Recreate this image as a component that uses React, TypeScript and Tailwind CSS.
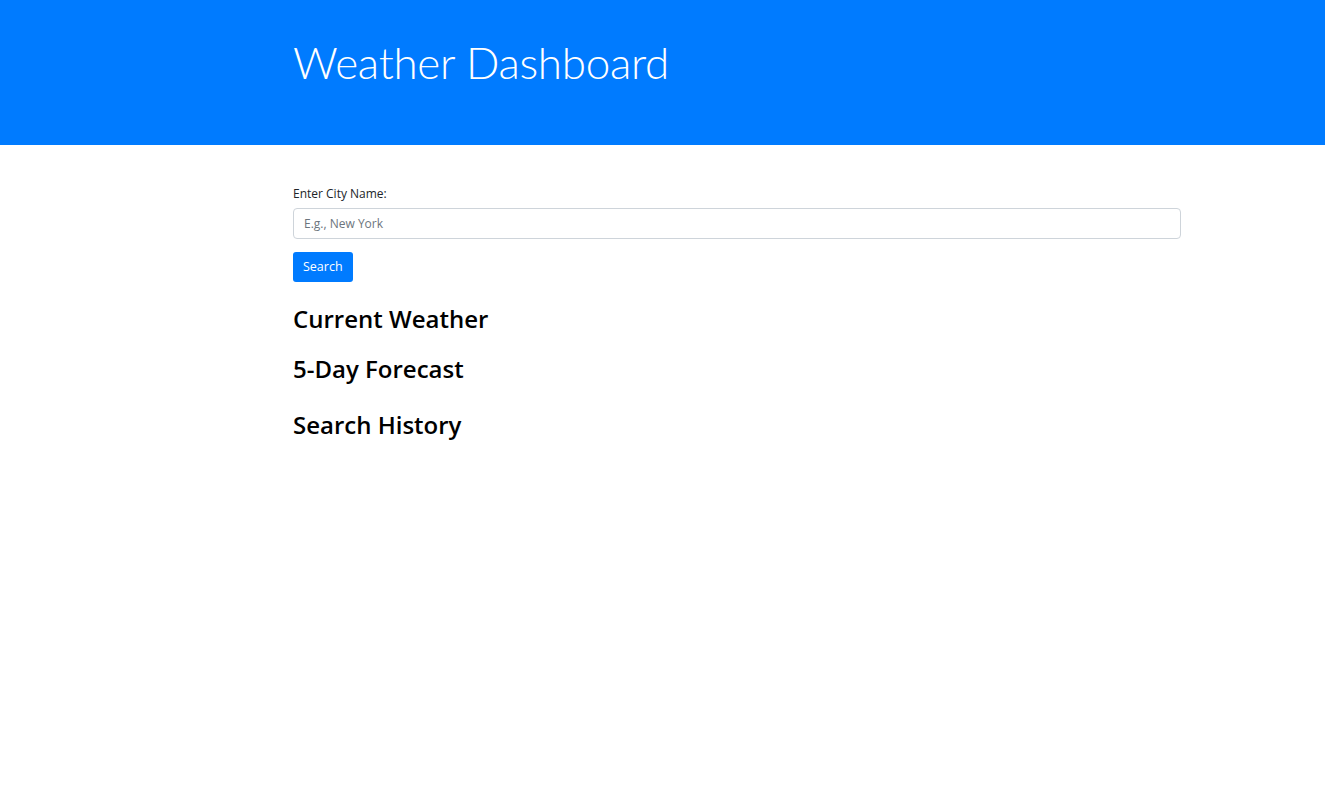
export default function App() {
  return (
    <div className="min-h-screen bg-white font-['Open_Sans',sans-serif] text-[#212529]">
      <header className="h-[145px] bg-[#007bff]">
        <div className="ml-[293px] pt-[36px]">
          <h1 className="font-['Lato',sans-serif] text-[44px] font-light leading-[1.2] tracking-[-0.3px] text-white">
            Weather Dashboard
          </h1>
        </div>
      </header>

      <main className="ml-[293px] w-[888px] pt-[40px]">
        <form className="flex flex-col">
          <label htmlFor="city" className="text-[12px] leading-[1.5] text-[#212529]">
            Enter City Name:
          </label>
          <input
            id="city"
            type="text"
            placeholder="E.g., New York"
            className="mt-[5px] h-[31px] w-full rounded-[4px] border border-[#ced4da] px-[10px] text-[12px] text-[#495057] placeholder:text-[#6c757d] outline-none"
          />
          <div className="mt-[13px]">
            <button
              type="button"
              className="h-[30px] rounded-[3px] bg-[#007bff] px-[10px] text-[12.5px] text-white"
            >
              Search
            </button>
          </div>
        </form>

        <section className="mt-[23px]">
          <h3 className="text-[24px] font-semibold leading-[1.2] text-black">Current Weather</h3>
        </section>
        <section className="mt-[21px]">
          <h3 className="text-[24px] font-semibold leading-[1.2] text-black">5-Day Forecast</h3>
        </section>
        <section className="mt-[27px]">
          <h3 className="text-[24px] font-semibold leading-[1.2] text-black">Search History</h3>
        </section>
      </main>
    </div>
  )
}
